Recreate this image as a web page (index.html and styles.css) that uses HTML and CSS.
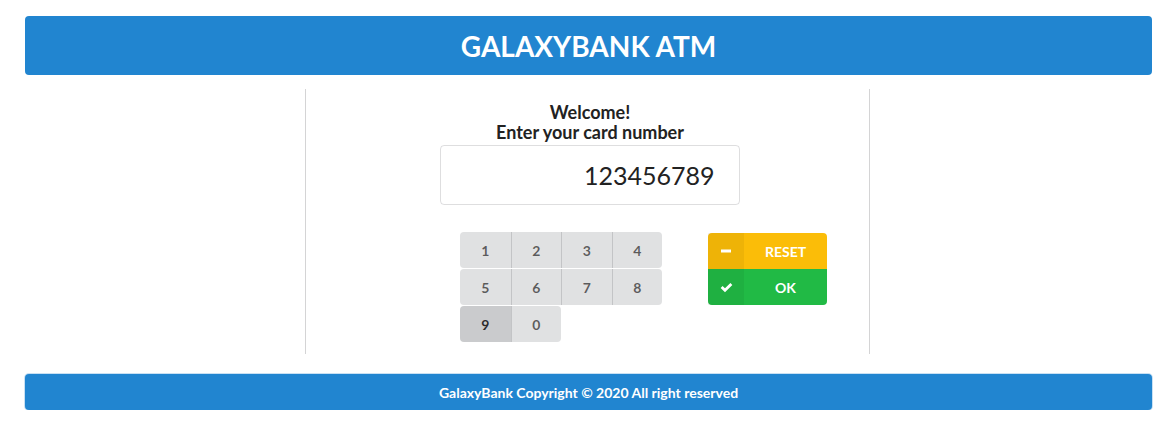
FILE: index.html
```html
<!DOCTYPE html>
<html>
<head>
<meta charset="utf-8">
<link rel="stylesheet" href="styles.css">
</head>
<body>
<header class="top-bar"><h1 class="title">GALAXYBANK ATM</h1></header>
<main class="panel">
  <div class="welcome"><div class="welcome-line">Welcome!</div><div class="welcome-line">Enter your card number</div></div>
  <div class="screen">123456789</div>
  <div class="controls">
    <div class="keypad">
      <div class="key-row"><button class="key">1</button><button class="key">2</button><button class="key">3</button><button class="key">4</button></div>
      <div class="key-row"><button class="key">5</button><button class="key">6</button><button class="key">7</button><button class="key">8</button></div>
      <div class="key-row"><button class="key active">9</button><button class="key">0</button></div>
    </div>
    <div class="actions">
      <button class="action reset"><span class="action-icon"><svg width="10" height="10" viewBox="0 0 10 10"><rect x="0" y="3.5" width="10" height="3" fill="#fff"/></svg></span><span class="action-label">RESET</span></button>
      <button class="action ok"><span class="action-icon"><svg width="13" height="11" viewBox="0 0 12 10"><path d="M0.6 5.4 L2.4 3.6 L4.6 5.8 L9.6 0.8 L11.4 2.6 L4.6 9.4 Z" fill="#fff"/></svg></span><span class="action-label">OK</span></button>
    </div>
  </div>
</main>
<footer class="bottom-bar">GalaxyBank Copyright © 2020 All right reserved</footer>
</body>
</html>
```
FILE: styles.css
```css
* { box-sizing: border-box; }
body {
  margin: 0;
  padding: 16px 16px 0 25px;
  font-family: Lato, "Open Sans", sans-serif;
  color: rgba(0,0,0,.87);
  background: #fff;
}
.top-bar {
  background: #2185d0;
  border-radius: 4px;
  height: 59px;
  display: flex;
  align-items: center;
  justify-content: center;
}
.title {
  margin: 0;
  color: #fff;
  font-size: 28px;
  font-weight: 700;
  line-height: 1;
}
.panel {
  margin: 14px 282px 0 280px;
  border-left: 1px solid #d4d4d5;
  border-right: 1px solid #d4d4d5;
  padding: 13px 0 12px;
}
.welcome {
  text-align: center;
  font-weight: 700;
  font-size: 18px;
  margin-left: 5px;
  color: #222;
}
.welcome-line {
  line-height: 21px;
  height: 20px;
}
.screen {
  width: 300px;
  height: 60px;
  margin: 3px auto 0;
  position: relative;
  left: 2px;
  border: 1px solid rgba(34,36,38,.15);
  border-radius: 4px;
  text-align: right;
  padding-right: 24px;
  font-size: 25px;
  line-height: 58px;
  color: #222;
}
.controls {
  display: flex;
  align-items: flex-start;
  margin: 27px 0 0 154px;
}
.keypad { display: flex; flex-direction: column; gap: 1px; }
.key-row { display: flex; }
.key {
  width: 50.5px;
  height: 36px;
  border: 0;
  margin: 0;
  padding: 0;
  background: #e0e1e2;
  color: rgba(0,0,0,.6);
  font-family: Lato, sans-serif;
  font-weight: 700;
  font-size: 14px;
  border-left: 1px solid rgba(34,36,38,.15);
}
.key:first-child { border-left: 0; border-radius: 4px 0 0 4px; }
.key:last-child { border-radius: 0 4px 4px 0; }
.key.active { background: #cacbcd; color: rgba(0,0,0,.8); }
.actions {
  display: flex;
  flex-direction: column;
  margin-left: 46px;
  margin-top: 1px;
}
.action {
  display: flex;
  width: 119px;
  height: 36px;
  border: 0;
  margin: 0;
  padding: 0;
  color: #fff;
  font-family: Lato, sans-serif;
  font-weight: 700;
  font-size: 14px;
}
.reset { background: #fbbd08; border-radius: 4px 4px 0 0; }
.ok { background: #21ba45; border-radius: 0 0 4px 4px; }
.action-icon {
  width: 36px;
  height: 100%;
  background: rgba(0,0,0,.05);
  display: flex;
  align-items: center;
  justify-content: center;
}
.action-label {
  flex: 1;
  height: 100%;
  display: flex;
  align-items: center;
  justify-content: center;
}
.bottom-bar {
  margin-top: 20px;
  background: #2185d0;
  border-radius: 4px;
  height: 36px;
  display: flex;
  align-items: center;
  justify-content: center;
  color: #fff;
  font-weight: 700;
  font-size: 14px;
  box-shadow: 0 0 0 1px rgba(34,133,208,.25);
}
```
